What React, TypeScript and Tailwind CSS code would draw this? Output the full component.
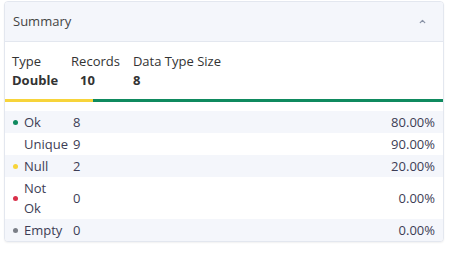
import { ChevronUp } from "lucide-react";

type Row = { label: string; count: number; pct: string; dot?: string };

const rows: Row[] = [
  { label: "Ok", count: 8, pct: "80.00%", dot: "bg-[#0f8a5f]" },
  { label: "Unique", count: 9, pct: "90.00%" },
  { label: "Null", count: 2, pct: "20.00%", dot: "bg-[#f7d43a]" },
  { label: "Not Ok", count: 0, pct: "0.00%", dot: "bg-[#d9304a]" },
  { label: "Empty", count: 0, pct: "0.00%", dot: "bg-[#7b7f87]" },
];

export default function App() {
  return (
    <div className="w-[450px] h-[255px] bg-white pl-[4px] pt-[1px] font-['Open_Sans',sans-serif] text-[13px] text-[#333]">
      <div className="w-[440px] rounded-[4px] border border-[#e3e7ef] overflow-hidden bg-white shadow-[0_1px_2px_rgba(0,0,0,0.06)]">
        {/* Header */}
        <div className="h-[40px] flex items-center justify-between pl-[8px] pr-[16px] bg-[#f4f6fb] border-b border-[#e3e7ef]">
          <span className="text-[#444]">Summary</span>
          <ChevronUp className="w-[9px] h-[9px] text-[#8a93a6]" strokeWidth={3.5} />
        </div>

        {/* Stats */}
        <div className="flex gap-[13px] pl-[7px] pt-[10px] pb-[9px] leading-[19px]">
          <div>
            <div>Type</div>
            <div className="font-bold">Double</div>
          </div>
          <div>
            <div>Records</div>
            <div className="font-bold pl-[9px]">10</div>
          </div>
          <div>
            <div>Data Type Size</div>
            <div className="font-bold">8</div>
          </div>
        </div>

        {/* Ratio bar */}
        <div className="flex h-[3px]">
          <div className="w-[88px] bg-[#f7d43a]" />
          <div className="flex-1 bg-[#0f8a5f]" />
        </div>

        {/* Rows */}
        <div className="pt-[9px] text-[#3d3d55]">
          {rows.map((r, i) => (
            <div
              key={r.label}
              className={`flex items-center pl-[8px] pr-[8px] py-[1px] leading-[20px] ${i % 2 === 0 ? "bg-[#f4f6fb]" : "bg-white"}`}
            >
              <div className="w-[10px] flex items-center">
                {r.dot && <span className={`w-[5px] h-[5px] rounded-full ${r.dot}`} />}
              </div>
              <div className="w-[38px] mr-[12px] pl-[1px]">{r.label}</div>
              <div className="flex-1">{r.count}</div>
              <div>{r.pct}</div>
            </div>
          ))}
        </div>
      </div>
    </div>
  );
}
